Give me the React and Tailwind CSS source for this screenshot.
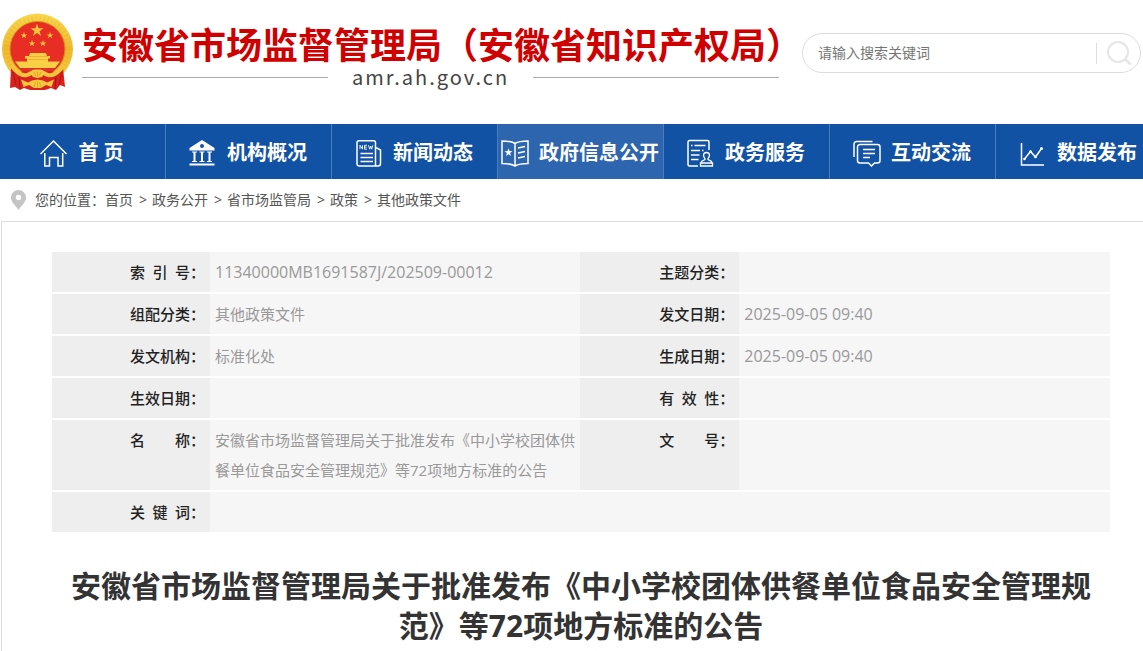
const navItems = [
  { label: "首 页", icon: HomeIcon },
  { label: "机构概况", icon: BankIcon },
  { label: "新闻动态", icon: NewsIcon },
  { label: "政府信息公开", icon: BookIcon, active: true },
  { label: "政务服务", icon: StampIcon },
  { label: "互动交流", icon: ChatIcon },
  { label: "数据发布", icon: ChartIcon },
];

const crumbs = ["首页", "政务公开", "省市场监管局", "政策", "其他政策文件"];

const rows = [
  [
    { label: "索 引 号", value: "11340000MB1691587J/202509-00012", latin: true },
    { label: "主题分类", value: "" },
  ],
  [
    { label: "组配分类", value: "其他政策文件" },
    { label: "发文日期", value: "2025-09-05 09:40", latin: true },
  ],
  [
    { label: "发文机构", value: "标准化处" },
    { label: "生成日期", value: "2025-09-05 09:40", latin: true },
  ],
  [
    { label: "生效日期", value: "" },
    { label: "有 效 性", value: "" },
  ],
  [
    {
      label: "名 称",
      value:
        "安徽省市场监督管理局关于批准发布《中小学校团体供餐单位食品安全管理规范》等72项地方标准的公告",
    },
    { label: "文 号", value: "" },
  ],
  [{ label: "关 键 词", value: "", wide: true }],
];

export default function App() {
  return (
    <div className="flex min-h-screen flex-col overflow-x-hidden bg-white font-['Open_Sans','Noto_Sans_CJK_SC',sans-serif] text-[#333]">
      <Header />
      <Nav />
      <Breadcrumb />

      <main className="ml-px flex-1 border-t border-l border-[#ddd] pt-[30px] pr-[33px] pl-[50px]">
        <InfoTable />

        <h1 className="mt-8 text-center text-[30px] leading-[40px] font-bold">
          安徽省市场监督管理局关于批准发布《中小学校团体供餐单位食品安全管理规范》等72项地方标准的公告
        </h1>
      </main>
    </div>
  );
}

function Header() {
  return (
    <header className="flex h-[124px] items-start">
      <Emblem />

      <div className="ml-2 w-[697px] shrink-0 pt-5 font-['Noto_Sans_CJK_SC',sans-serif]">
        <p className="text-[36px] leading-[46px] font-bold whitespace-nowrap text-[#d00000]">
          安徽省市场监督管理局（安徽省知识产权局）
        </p>
        <div className="flex items-center gap-6">
          <span className="h-px flex-1 bg-[#aaa]" />
          <span className="text-[20px] leading-[22px] tracking-widest text-[#444]">
            amr.ah.gov.cn
          </span>
          <span className="h-px flex-1 bg-[#aaa]" />
        </div>
      </div>

      <form
        onSubmit={(e) => e.preventDefault()}
        className="mt-[33px] mr-[2px] ml-[23px] flex h-10 flex-1 items-center rounded-full border border-[#ddd] pl-[15px]"
      >
        <input
          type="text"
          aria-label="搜索"
          placeholder="请输入搜索关键词"
          className="min-w-0 flex-1 text-sm outline-none placeholder:text-[#757575]"
        />
        <button
          type="submit"
          aria-label="提交"
          className="flex h-[21px] w-11 items-center justify-center border-l border-[#ddd]"
        >
          <svg width="26" height="26" viewBox="0 0 26 26" fill="none" stroke="#e6e6e6" strokeWidth="2">
            <circle cx="12" cy="12" r="10" />
            <path d="M19 19l5.500 5.500" strokeWidth="2.500" />
          </svg>
        </button>
      </form>
    </header>
  );
}

function Nav() {
  return (
    <nav className="flex overflow-hidden bg-[#1252a5]">
      {navItems.map(({ label, icon: Icon, active }) => (
        <a
          key={label}
          href="#"
          className={`flex h-[55px] w-[166px] shrink-0 items-center justify-center gap-[10px] border-r border-[#4a7dc0] pt-[2px] pr-px text-xl font-bold whitespace-nowrap text-white ${
            active ? "bg-[#2d65af]" : ""
          }`}
        >
          <Icon />
          {label}
        </a>
      ))}
    </nav>
  );
}

function Breadcrumb() {
  return (
    <div className="flex h-[42px] items-center pl-[11px] text-sm text-[#555]">
      <svg width="15" height="20" viewBox="0 0 15 20" className="mr-[9px]">
        <path
          fill="#c4c4c4"
          fillRule="evenodd"
          d="M7.500 0A7.500 7.500 0 0 0 0 7.500C0 12 5 16 7.500 20C10 16 15 12 15 7.500A7.500 7.500 0 0 0 7.500 0ZM7.500 4.800a2.700 2.700 0 1 1 0 5.400a2.700 2.700 0 0 1 0-5.400Z"
        />
      </svg>
      <span>您的位置：</span>
      {crumbs.map((crumb, i) => (
        <span key={crumb} className="flex">
          {i > 0 && <span className="pr-[5px] pl-[6px]">&gt;</span>}
          <a href="#">{crumb}</a>
        </span>
      ))}
    </div>
  );
}

function InfoTable() {
  return (
    <table className="w-full table-fixed border-separate border-spacing-0 text-[15px] leading-[30px]">
      <colgroup>
        <col className="w-[158px]" />
        <col className="w-[35%]" />
        <col className="w-[159px]" />
        <col />
      </colgroup>
      <tbody>
        {rows.map((row) => (
          <tr key={row[0].label}>
            {row.map((cell) => (
              <InfoCell key={cell.label} {...cell} />
            ))}
          </tr>
        ))}
      </tbody>
    </table>
  );
}

function InfoCell({ label, value, latin, wide }) {
  return (
    <>
      <th
        scope="row"
        className="h-[42px] border-b-2 border-white bg-[#eee] p-[5px] align-top font-medium text-[#222]"
      >
        <div className="flex justify-end">
          <span className="w-[60px] [text-align-last:justify]">{label}</span>
          <span>：</span>
        </div>
      </th>
      <td
        colSpan={wide ? 3 : 1}
        className={`border-b-2 border-white bg-[#f6f6f6] py-[5px] pl-[5px] align-top text-[#999] ${
          latin ? "text-base leading-[30px]" : ""
        }`}
      >
        {value}
      </td>
    </>
  );
}

function NavIcon({ children }) {
  return (
    <svg
      width="28"
      height="28"
      viewBox="0 0 28 28"
      fill="none"
      stroke="#fff"
      strokeWidth="1.500"
      className="shrink-0"
    >
      {children}
    </svg>
  );
}

function HomeIcon() {
  return (
    <NavIcon>
      <path d="M.5 15L13.500 2L26.500 15" />
      <path d="M4.800 14V27H9.500V18.500H18V27H22.700V14" />
    </NavIcon>
  );
}

function BankIcon() {
  return (
    <NavIcon>
      <path
        fill="#fff"
        stroke="none"
        fillRule="evenodd"
        d="M13 1L25.500 9V11.500H.5V9ZM13 5a2 2 0 1 0 0 4a2 2 0 0 0 0-4Z"
      />
      <path d="M3 13H8M10.500 13H15.500M18 13H23M3 22.500H8M10.500 22.500H15.500M18 22.500H23" strokeWidth="1" />
      <path d="M5.500 13V22M13 13V22M20.500 13V22" strokeWidth="2" />
      <path d="M.5 25.500H25.500" strokeWidth="2" />
    </NavIcon>
  );
}

function NewsIcon() {
  return (
    <NavIcon>
      <path d="M20.500 25V3.500A1.800 1.800 0 0 0 18.700 1.700H3.800A1.800 1.800 0 0 0 2 3.500V25A2.300 2.300 0 0 0 4.300 27H23A2.500 2.500 0 0 0 25.500 24.500V11L22 9H20.500M20.500 24.500A2 2 0 0 0 23 27" />
      <path d="M5 10.200V6.300L7.500 10.200V6.300M12 6.300H9.500V10.200H12M9.500 8.200H11.800M13.500 6.300L14.700 10.200L15.700 7L16.700 10.200L17.900 6.300" strokeWidth=".9" />
      <path d="M5.500 14.500H18M5.500 18.500H18M5.500 22.500H18" />
    </NavIcon>
  );
}

function BookIcon() {
  return (
    <NavIcon>
      <path d="M14 4.500C10.500 2.300 6 2 1 2V24.500C6 24.500 10.500 25 14 27C17.500 25 22 24.500 27 24.500V2C22 2 17.500 2.300 14 4.500ZM14 4.500V27" />
      <path
        fill="#fff"
        stroke="none"
        d="M7.500 9.200L8.500 12.100L11.500 12.200L9.100 14L10 17L7.500 15.200L5 17L5.900 14L3.500 12.200L6.500 12.100Z"
      />
      <path d="M17 9L24 7.500M17 14L24 12.500M17 19L24 17.500" />
    </NavIcon>
  );
}

function StampIcon() {
  return (
    <NavIcon>
      <path d="M11 27H2.500A1.500 1.500 0 0 1 1 25.500V3A1.500 1.500 0 0 1 2.500 1.500H20.500A1.500 1.500 0 0 1 22 3V11" />
      <path d="M4 6.500H5.500M7.500 6.500H18.500M4 11.500H13M15 11.500H16.500M4 16H12.500M4 20.500H11.500" strokeWidth="1.300" />
      <path
        d="M18 20.500C18.500 19 16.500 18.500 16.500 16.500A3 3 0 0 1 22.500 16.500C22.500 18.500 20.500 19 21 20.500L24.500 22.500V24H14.500V22.500ZM13.500 24H25.500V27H13.500Z"
        strokeWidth="1.300"
      />
    </NavIcon>
  );
}

function ChatIcon() {
  return (
    <NavIcon>
      <path d="M1 18V5A2.500 2.500 0 0 1 3.500 2.500H19.500" />
      <path d="M7 5.500H24.500A2.500 2.500 0 0 1 27 8V21.500A2.500 2.500 0 0 1 24.500 24H21.500L18.500 27L15.500 24H7A2.500 2.500 0 0 1 4.500 21.500V8A2.500 2.500 0 0 1 7 5.500Z" />
      <path d="M10 10.500H22M10 14.500H22M10 18.500H17" />
    </NavIcon>
  );
}

function ChartIcon() {
  return (
    <NavIcon>
      <path d="M2.500 4V26H25" />
      <path d="M5.500 20L11.500 12.500L16.500 18L22.500 9.500" />
      <g fill="#fff" stroke="none">
        <circle cx="5.500" cy="20" r="1.300" />
        <circle cx="11.500" cy="12.500" r="1.300" />
        <circle cx="16.500" cy="18" r="1.300" />
        <circle cx="22.500" cy="9.500" r="1.500" />
      </g>
    </NavIcon>
  );
}

const STAR = "M0-5L1.200-1.600L4.800-1.600L1.900.6L3 4L0 1.900L-3 4L-1.900.6L-4.800-1.600L-1.200-1.600Z";

function Emblem() {
  return (
    <svg width="74" height="80" viewBox="0 0 74 80" className="mt-3 shrink-0">
      <defs>
        <linearGradient id="gold" x1="0" y1="0" x2="0" y2="1">
          <stop offset="0" stopColor="#f9d84c" />
          <stop offset=".5" stopColor="#efb92f" />
          <stop offset="1" stopColor="#f7cd3d" />
        </linearGradient>
      </defs>

      {/* wheat ring */}
      <circle cx="37.500" cy="37" r="35.500" fill="url(#gold)" />
      <circle cx="37.500" cy="37" r="31" fill="none" stroke="#d99a1c" strokeWidth="5" strokeDasharray="1 3" opacity=".3" />
      <circle cx="37.500" cy="37" r="27.500" fill="#e72d24" stroke="#d98b19" strokeWidth="1" />

      {/* stars */}
      <g fill="#f5c53a">
        <path d={STAR} transform="translate(37 18.500) scale(1.350)" />
        <path d={STAR} transform="translate(24 23.500) scale(.7)" />
        <path d={STAR} transform="translate(50 23.500) scale(.7)" />
        <path d={STAR} transform="translate(32 31.500) scale(.7)" />
        <path d={STAR} transform="translate(43 31.500) scale(.7)" />
      </g>

      {/* ribbons */}
      <path
        fill="#d9211d"
        d="M11 56L20 60L37.500 56L55 60L63 56L65 75L60 73L56 78L51 76L45 78H30L24 76L20 78L15 75L10 76Z"
      />
      <path d="M13 60L16 73M19 65L20 77M62 60L59 73M56 65L55 77" stroke="#a81616" strokeWidth="1" />

      {/* gate */}
      <path
        fill="#f8cf45"
        d="M30 41H46L47 44H50V46.500H48V49.500H60L55 56H20L15 49.500H27V46.500H25V44H29Z"
      />
      <path d="M28 44.500H48M28 47.500H47" stroke="#e0a02a" strokeWidth=".6" />

      {/* lower wheat and knots */}
      <path
        fill="none"
        stroke="#f4c53a"
        strokeWidth="4"
        d="M11 53C16 60 22 64 27 63C32 62 32 58.500 37.500 58.500C43 58.500 43 62 48 63C53 64 59 60 64 53"
      />
      <path fill="#e2302a" d="M20 56H55L47 60L42 57.500H33L28 60Z" />
      <path fill="#f6c83e" d="M30 61L33.500 58H41.500L45 61L42 65L37.500 66L33 65Z" />
      <path d="M34 60L36 64M37.500 59.500V64.500M41 60L39 64" stroke="#d98b19" strokeWidth=".6" />
      <path
        fill="#f6c83e"
        d="M21 67.500L28 70.500L32 68.500L37.500 67.500L43 68.500L47 70.500L54 67.500L51.500 75L46 73L41 76H34L29 73L23.500 75Z"
      />
      <path d="M34 75L35.500 70M37.500 75.500V69.500M41 75L39.500 70" stroke="#d98b19" strokeWidth=".6" />
    </svg>
  );
}
